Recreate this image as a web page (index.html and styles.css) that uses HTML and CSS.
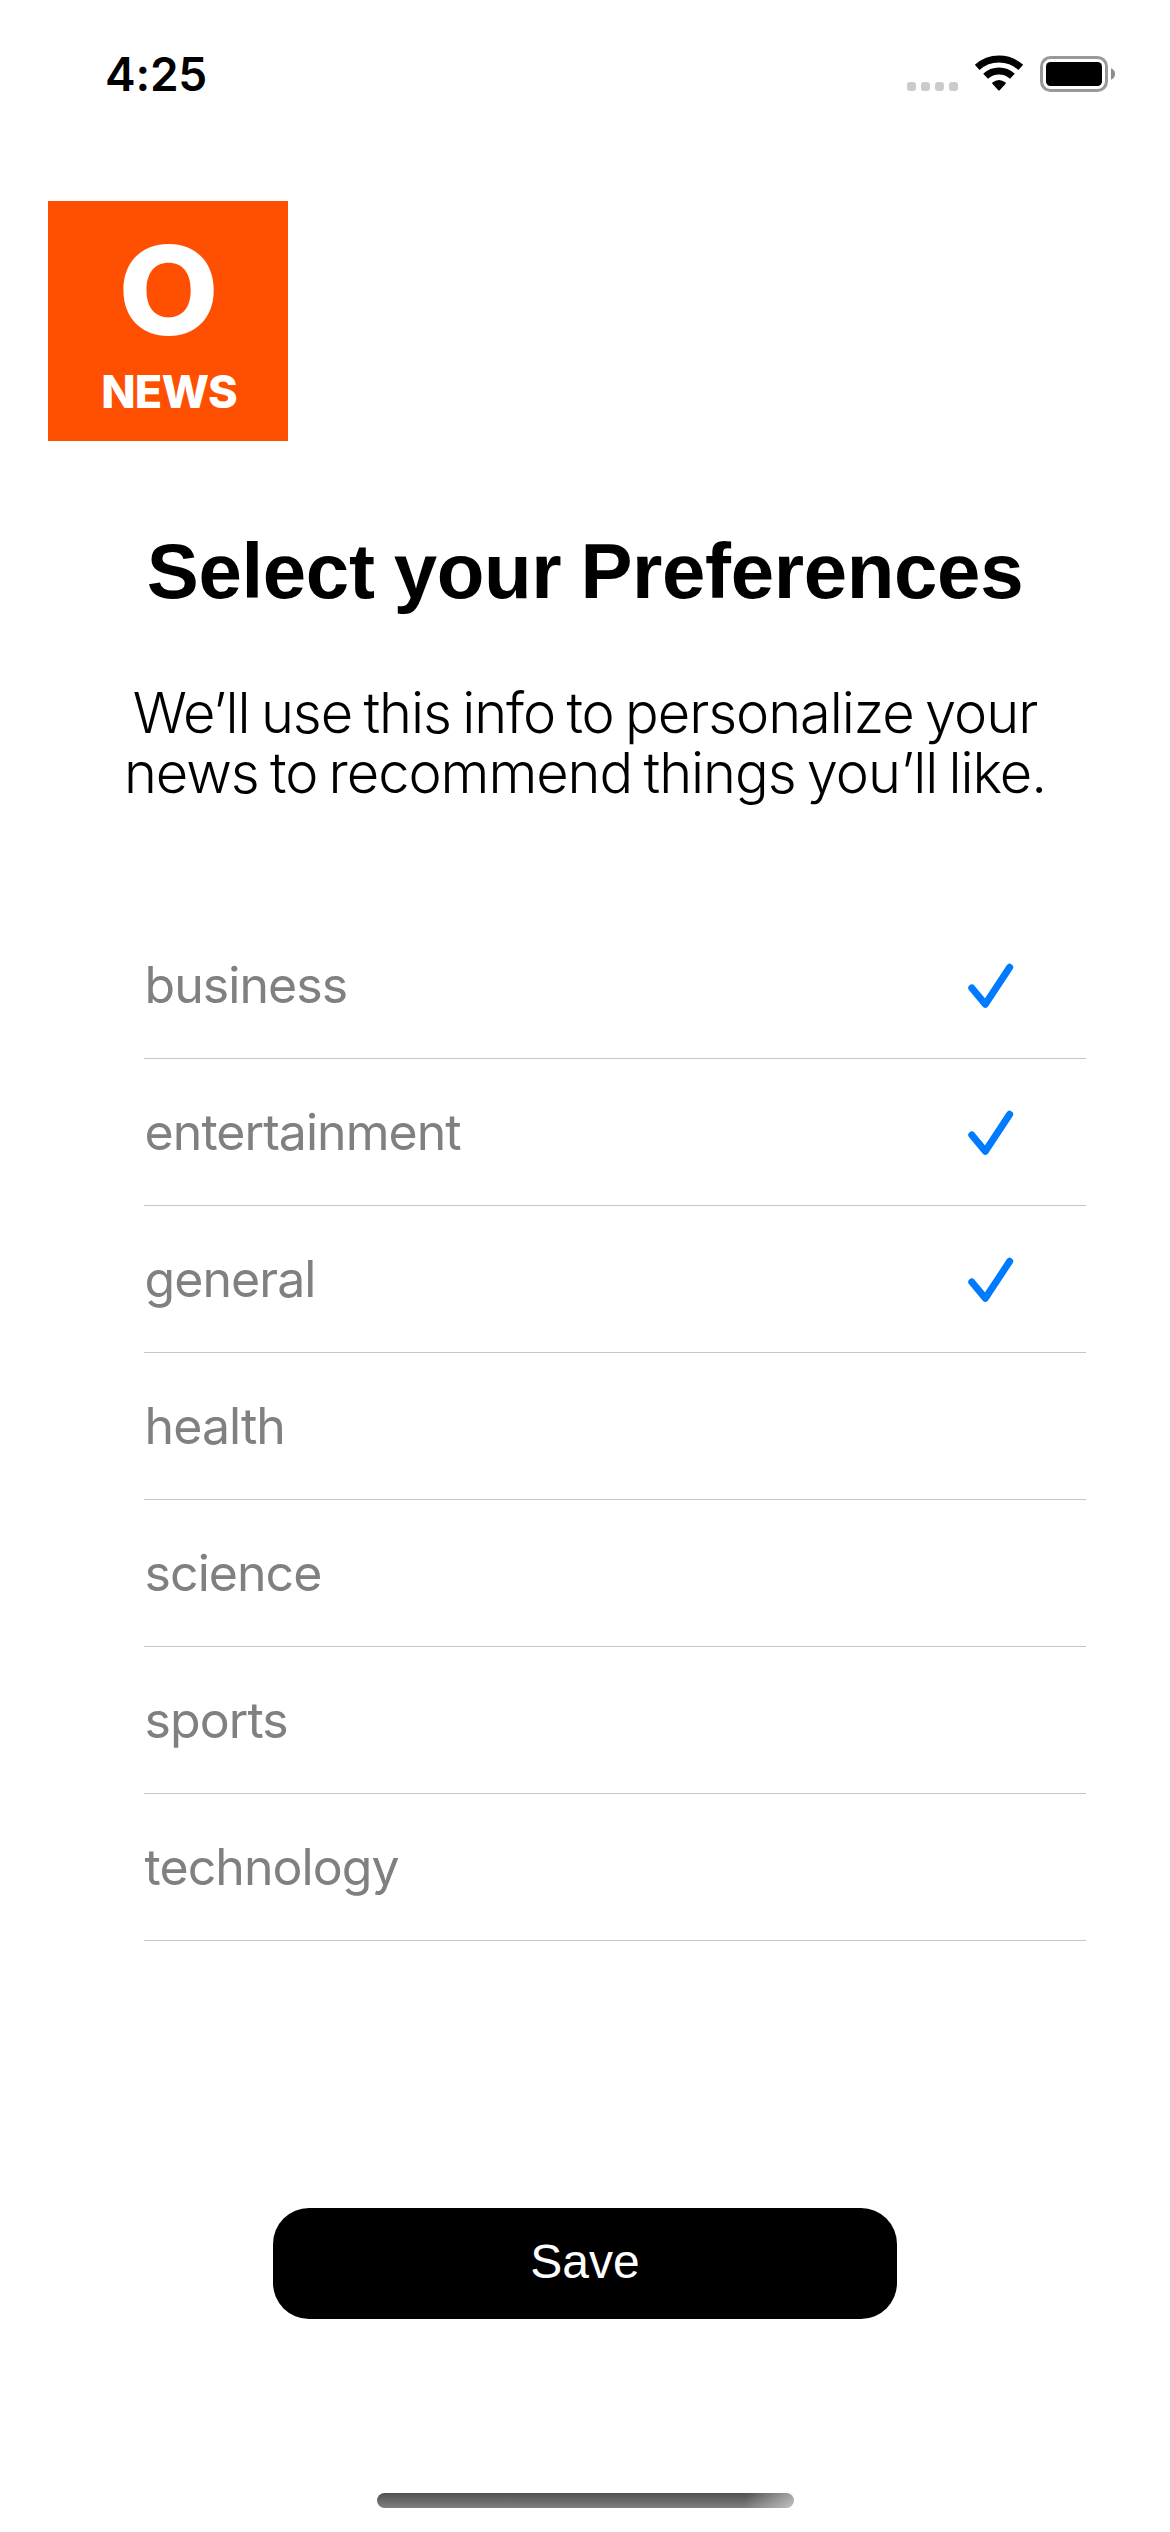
FILE: index.html
```html
<!DOCTYPE html>
<html lang="en">
<head>
<meta charset="utf-8">
<title>Select your Preferences</title>
<link rel="stylesheet" href="styles.css">
</head>
<body>
<div class="screen">
  <header class="status">
    <span class="time">4:25</span>
    <svg class="status-icons" width="210" height="40" viewBox="0 0 210 40">
      <g fill="#cbcbcb">
        <rect x="1" y="28" width="9" height="9" rx="3"/>
        <rect x="15" y="28" width="9" height="9" rx="3"/>
        <rect x="29" y="28" width="9" height="9" rx="3"/>
        <rect x="43" y="28" width="9" height="9" rx="3"/>
      </g>
      <g fill="none" stroke="#000" stroke-width="7">
        <path d="M71.2 13.4A32.6 32.6 0 0 1 114.8 13.4"/>
        <path d="M79.6 22.3A19.6 19.6 0 0 1 106.4 22.3"/>
      </g>
      <path d="M86.4 28.6Q93 23.4 99.6 28.6Q100.2 29.2 99.6 29.8L93.7 36.2Q93 36.9 92.3 36.2L86.4 29.8Q85.8 29.2 86.4 28.6Z" fill="#000"/>
      <rect x="135.5" y="3.5" width="65" height="33" rx="9" fill="none" stroke="#999" stroke-width="3"/>
      <rect x="140" y="8" width="56" height="24" rx="4.5" fill="#000"/>
      <path d="M205 14.3Q209 16 209 20Q209 24 205 25.7Z" fill="#8c8c8c"/>
    </svg>
  </header>

  <div class="logo">
    <span class="logo-mark">O</span>
    <span class="logo-word">NEWS</span>
  </div>

  <h1 class="title">Select your Preferences</h1>
  <p class="intro">We’ll use this info to personalize your<br>news to recommend things you’ll like.</p>

  <ul class="topics">
    <li class="topic"><span>business</span><svg class="check" viewBox="0 0 46 46"><path d="M3.8 26L17.3 42.3L41.7 5.3"/></svg></li>
    <li class="topic"><span>entertainment</span><svg class="check" viewBox="0 0 46 46"><path d="M3.8 26L17.3 42.3L41.7 5.3"/></svg></li>
    <li class="topic"><span>general</span><svg class="check" viewBox="0 0 46 46"><path d="M3.8 26L17.3 42.3L41.7 5.3"/></svg></li>
    <li class="topic"><span>health</span></li>
    <li class="topic"><span>science</span></li>
    <li class="topic"><span>sports</span></li>
    <li class="topic"><span>technology</span></li>
  </ul>

  <button class="save" type="button">Save</button>
  <div class="home-indicator"></div>
</div>
</body>
</html>
```
FILE: styles.css
```css
* { box-sizing: border-box; }

body {
  margin: 0;
  background: #fff;
  color: #000;
  font-family: Inter, "Liberation Sans", sans-serif;
}

.screen {
  display: flex;
  flex-direction: column;
  align-items: center;
  width: 1170px;
  height: 2532px;
  overflow: hidden;
}

.status {
  display: flex;
  justify-content: space-between;
  align-items: center;
  width: 100%;
  height: 148px;
  padding: 0 54px 0 105px;
}

.time {
  font-size: 46px;
  font-weight: 600;
  letter-spacing: -0.2px;
}

.logo {
  display: flex;
  flex-direction: column;
  align-items: center;
  align-self: flex-start;
  width: 240px;
  height: 240px;
  margin: 53px 0 0 48px;
  padding: 44px 0 0 2px;
  background: #ff4f00;
  color: #fff;
}

.logo-mark {
  font-size: 123px;
  line-height: 92px;
  font-weight: 800;
  transform: scaleX(1.06);
}

.logo-word {
  margin-top: 32px;
  font-size: 45px;
  line-height: 45px;
  font-weight: 800;
  letter-spacing: -0.8px;
}

.title {
  margin: 85px 0 0;
  font: 700 78px/90px "Liberation Sans", sans-serif;
  letter-spacing: -0.35px;
  word-spacing: -2.2px;
}

.intro {
  margin: 67px 0 0;
  font-size: 56px;
  font-weight: 300;
  line-height: 60px;
  letter-spacing: -1.05px;
  word-spacing: -3.4px;
  text-align: center;
}

.topics {
  width: 942px;
  margin: 109px 0 0 60px;
  padding: 0;
  list-style: none;
}

.topic {
  display: flex;
  justify-content: space-between;
  align-items: center;
  height: 147px;
  padding: 0 72px 0 0.6px;
  border-bottom: 1px solid #c6c6c6;
  color: #808080;
  font-size: 50px;
  letter-spacing: -0.95px;
}

.check {
  width: 46px;
  height: 46px;
  fill: none;
  stroke: #007aff;
  stroke-width: 7;
  stroke-linecap: round;
  stroke-linejoin: round;
}

.save {
  width: 624px;
  height: 111px;
  margin: 267px 0 0;
  padding: 0 0 4px;
  border: 0;
  border-radius: 36px;
  background: #000;
  color: #fff;
  font: 400 48px "Liberation Sans", sans-serif;
}

.home-indicator {
  width: 417px;
  height: 15px;
  margin-top: 174px;
  border-radius: 8px;
  background:
    linear-gradient(100deg, transparent 88%, rgba(255, 255, 255, 0.5) 100%),
    linear-gradient(#505050, #808080);
}
```
